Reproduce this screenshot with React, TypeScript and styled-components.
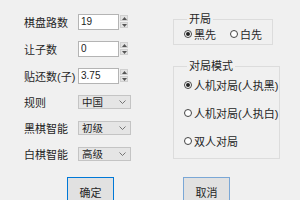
import styled, { createGlobalStyle } from 'styled-components'

const GlobalStyle = createGlobalStyle`
  html, body {
    margin: 0;
    padding: 0;
    background: #f0f0f0;
    overflow: hidden;
  }
  * {
    box-sizing: border-box;
  }
`

const Dialog = styled.div`
  width: 300px;
  height: 200px;
  overflow: hidden;
  background: #f0f0f0;
  font-family: 'Liberation Sans', 'Noto Sans CJK SC', sans-serif;
  font-size: 11px;
  color: #262626;
  display: flex;
  flex-direction: column;
`

const Top = styled.div`
  height: 177px;
  flex: none;
  display: flex;
`

const Form = styled.div`
  width: 172px;
  flex: none;
  padding: 8px 0 0 24px;
  display: flex;
  flex-direction: column;
`

const Row = styled.div<{ $h: number }>`
  height: ${p => p.$h}px;
  display: flex;
  align-items: center;
`

const Label = styled.span`
  width: 54px;
  flex: none;
  white-space: nowrap;
`

const Spin = styled.div`
  display: flex;
  align-items: center;
  gap: 1px;
`

const NumberBox = styled.input`
  width: 41px;
  height: 16px;
  border: 1px solid #b4b4b4;
  background: #fff;
  padding: 0 2px;
  font-family: 'Liberation Sans', Arial, sans-serif;
  font-size: 10px;
  color: #222;
  outline: none;
`

const SpinButtons = styled.div`
  display: flex;
  flex-direction: column;
  gap: 1px;
`

const SpinButton = styled.div`
  width: 8px;
  height: 6px;
  background: #e3e3e3;
  border: 1px solid #d0d0d0;
  display: flex;
  align-items: center;
  justify-content: center;
`

const Combo = styled.div`
  width: 53px;
  height: 14px;
  background: #e5e5e5;
  border: 1px solid #c4c4c4;
  display: flex;
  align-items: center;
  justify-content: space-between;
  padding: 0 4px 0 3px;
  font-size: 10.5px;
  line-height: 1;
`

const Side = styled.div`
  padding: 11px 0 0 1px;
  display: flex;
  flex-direction: column;
  gap: 13px;
`

const Group = styled.fieldset<{ $w: number; $pt: number; $pb: number; $gap: number }>`
  width: ${p => p.$w}px;
  margin: 0;
  border: 1px solid #dcdcdc;
  padding: ${p => p.$pt}px 0 ${p => p.$pb}px 10px;
  display: flex;
  flex-direction: ${p => (p.$gap ? 'column' : 'row')};
  gap: ${p => p.$gap}px;
`

const Legend = styled.legend`
  margin-left: 3px;
  padding: 0 2px;
  line-height: 16px;
`

const Radio = styled.label<{ $w?: number }>`
  display: flex;
  align-items: center;
  gap: 2px;
  height: 14px;
  width: ${p => (p.$w ? `${p.$w}px` : 'auto')};
  white-space: nowrap;
`

const Dot = styled.span<{ $on?: boolean }>`
  width: 8px;
  height: 8px;
  border-radius: 50%;
  border: 1px solid #444;
  background: #fff;
  display: flex;
  align-items: center;
  justify-content: center;
  &::after {
    content: '';
    width: 4px;
    height: 4px;
    border-radius: 50%;
    background: ${p => (p.$on ? '#222' : 'transparent')};
  }
`

const Buttons = styled.div`
  width: 300px;
  flex: none;
  display: flex;
  justify-content: flex-start;
  padding-left: 67px;
  gap: 69px;
`

const Button = styled.button<{ $default?: boolean }>`
  width: 47px;
  min-width: 0;
  flex: none;
  height: 30px;
  padding: 0;
  margin: 0;
  background: #e1e1e1;
  border: 1px solid ${p => (p.$default ? '#0078d7' : '#7aa7d6')};
  font-family: 'Liberation Sans', 'Noto Sans CJK SC', sans-serif;
  font-size: 11px;
  color: #262626;
`

const Up = () => (
  <svg width="5" height="3" viewBox="0 0 5 3">
    <polygon points="0,3 5,3 2.5,0" fill="#555" />
  </svg>
)

const Down = () => (
  <svg width="5" height="3" viewBox="0 0 5 3">
    <polygon points="0,0 5,0 2.5,3" fill="#555" />
  </svg>
)

const Chevron = () => (
  <svg width="7" height="4" viewBox="0 0 7 4">
    <polyline points="0.5,0.5 3.5,3.5 6.5,0.5" fill="none" stroke="#666" strokeWidth="0.9" />
  </svg>
)

const spins = [
  { label: '棋盘路数', value: '19' },
  { label: '让子数', value: '0' },
  { label: '贴还数(子)', value: '3.75' },
]

const combos = [
  { label: '规则', value: '中国' },
  { label: '黑棋智能', value: '初级' },
  { label: '白棋智能', value: '高级' },
]

const App = () => {
  return (
    <Dialog>
      <GlobalStyle />
      <Top>
        <Form>
          {spins.map(s => (
            <Row $h={27} key={s.label}>
              <Label>{s.label}</Label>
              <Spin>
                <NumberBox defaultValue={s.value} readOnly />
                <SpinButtons>
                  <SpinButton><Up /></SpinButton>
                  <SpinButton><Down /></SpinButton>
                </SpinButtons>
              </Spin>
            </Row>
          ))}
          {combos.map(c => (
            <Row $h={26} key={c.label}>
              <Label>{c.label}</Label>
              <Combo>
                <span>{c.value}</span>
                <Chevron />
              </Combo>
            </Row>
          ))}
        </Form>
        <Side>
          <Group $w={100} $pt={0} $pb={3} $gap={0}>
            <Legend>开局</Legend>
            <Radio $w={46}><Dot $on />黑先</Radio>
            <Radio><Dot />白先</Radio>
          </Group>
          <Group $w={107} $pt={4} $pb={10} $gap={14}>
            <Legend>对局模式</Legend>
            <Radio><Dot $on />人机对局(人执黑)</Radio>
            <Radio><Dot />人机对局(人执白)</Radio>
            <Radio><Dot />双人对局</Radio>
          </Group>
        </Side>
      </Top>
      <Buttons>
        <Button $default>确定</Button>
        <Button>取消</Button>
      </Buttons>
    </Dialog>
  )
}

export default App
